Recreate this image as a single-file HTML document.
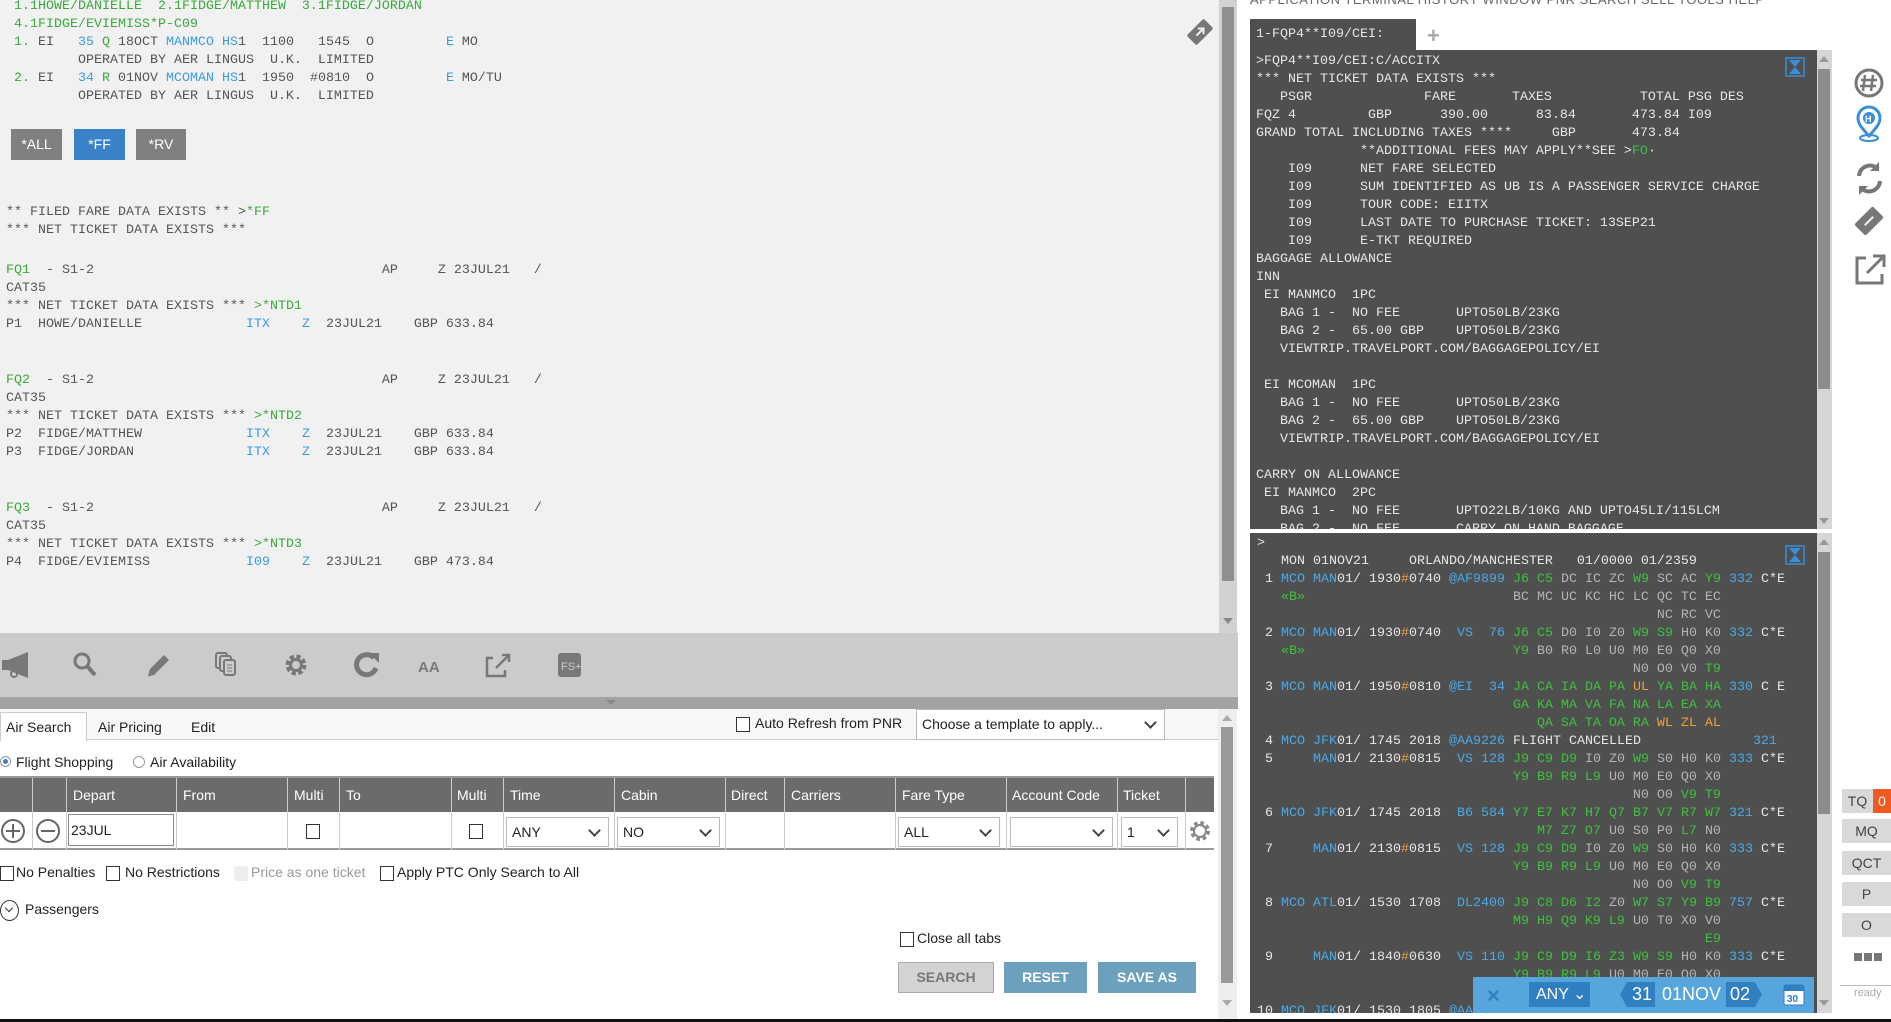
<!DOCTYPE html>
<html><head><meta charset="utf-8">
<style>
*{margin:0;padding:0;box-sizing:border-box}
body{width:1891px;height:1022px;position:relative;overflow:hidden;background:#fff;font-family:"Liberation Sans",sans-serif}
.a{position:absolute}
pre{position:absolute;font-family:"Liberation Mono",monospace;font-size:13.33px;line-height:18px;white-space:pre}
.lt{color:#555}
.lt .g{color:#3aa83a}.lt .b{color:#3b9be0}
.tm{color:#e6e6e6}
.tm .g{color:#3fc13f}.tm .b{color:#4ba9e6}.tm .o{color:#f0a23a}.tm .d{color:#b4b4b4}
.hd{position:absolute;top:778px;height:34px;background:#6b6b6b;color:#fff;font-size:14px;line-height:34px}
.sel{position:absolute;border:1px solid #bbb;background:#fff;font-size:14px;height:30px;line-height:28px;padding-left:5px;color:#222}
.sel:after{content:"";position:absolute;right:9px;top:8px;width:7px;height:7px;border-right:2px solid #444;border-bottom:2px solid #444;transform:rotate(45deg)}
.cb{position:absolute;width:14px;height:15px;border:1px solid #333;background:#fff}
.ft{position:absolute;font-size:14px;color:#222}
.rb{position:absolute;left:1842px;width:49px;height:24px;background:#d9d9d9;color:#444;font-size:14px;text-align:center;line-height:24px}
</style></head><body>

<!-- LEFT TERMINAL -->
<div class="a" style="left:0;top:0;width:1219px;height:633px;background:#f1f1f1"></div>
<div class="a" style="left:1219px;top:0;width:18px;height:633px;background:#d2d2d2"></div>
<div class="a" style="left:1222px;top:7px;width:12px;height:574px;background:#8f8f8f"></div>
<div class="a" style="left:1223px;top:618px;width:0;height:0;border-left:5px solid transparent;border-right:5px solid transparent;border-top:6px solid #888"></div>
<svg class="a" style="left:1186px;top:18px" width="28" height="28" viewBox="0 0 28 28"><g transform="rotate(-45 14 14)"><rect x="2" y="7" width="24" height="14" rx="2" fill="#777"/><path d="M9 14h10M15 10l4 4-4 4" stroke="#f1f1f1" stroke-width="2" fill="none"/></g></svg>

<pre class="lt" style="left:6px;top:-2px"> <span class="g">1.1HOWE/DANIELLE  2.1FIDGE/MATTHEW  3.1FIDGE/JORDAN</span>
 <span class="g">4.1FIDGE/EVIEMISS*P-C09</span>
 <span class="g">1.</span> EI   <span class="b">35</span> <span class="g">Q</span> 18OCT <span class="b">MANMCO HS</span>1  1100   1545  O         <span class="b">E</span> MO
         OPERATED BY AER LINGUS  U.K.  LIMITED
 <span class="g">2.</span> EI   <span class="b">34</span> <span class="g">R</span> 01NOV <span class="b">MCOMAN HS</span>1  1950  #0810  O         <span class="b">E</span> MO/TU
         OPERATED BY AER LINGUS  U.K.  LIMITED</pre>
<div class="a" style="left:11px;top:129px;width:51px;height:31px;background:#808080;color:#fff;font-size:14px;line-height:31px;text-align:center">*ALL</div>
<div class="a" style="left:74px;top:129px;width:51px;height:31px;background:#3a82c8;color:#fff;font-size:14px;line-height:31px;text-align:center">*FF</div>
<div class="a" style="left:136px;top:129px;width:50px;height:31px;background:#808080;color:#fff;font-size:14px;line-height:31px;text-align:center">*RV</div>
<pre class="lt" style="left:6px;top:204px">** FILED FARE DATA EXISTS ** &gt;<span class="g">*FF</span>
*** NET TICKET DATA EXISTS ***</pre>
<pre class="lt" style="left:6px;top:262px"><span class="g">FQ1</span>  - S1-2                                    AP     Z 23JUL21   /
CAT35
*** NET TICKET DATA EXISTS *** <span class="g">&gt;*NTD1</span>
P1  HOWE/DANIELLE             <span class="b">ITX</span>    <span class="b">Z</span>  23JUL21    GBP 633.84</pre>
<pre class="lt" style="left:6px;top:372px"><span class="g">FQ2</span>  - S1-2                                    AP     Z 23JUL21   /
CAT35
*** NET TICKET DATA EXISTS *** <span class="g">&gt;*NTD2</span>
P2  FIDGE/MATTHEW             <span class="b">ITX</span>    <span class="b">Z</span>  23JUL21    GBP 633.84
P3  FIDGE/JORDAN              <span class="b">ITX</span>    <span class="b">Z</span>  23JUL21    GBP 633.84</pre>
<pre class="lt" style="left:6px;top:500px"><span class="g">FQ3</span>  - S1-2                                    AP     Z 23JUL21   /
CAT35
*** NET TICKET DATA EXISTS *** <span class="g">&gt;*NTD3</span>
P4  FIDGE/EVIEMISS            <span class="b">I09</span>    <span class="b">Z</span>  23JUL21    GBP 473.84</pre>

<!-- TOOLBAR -->
<div class="a" style="left:0;top:633px;width:1238px;height:64px;background:#cbcbcb"></div>
<div class="a" style="left:0;top:697px;width:1238px;height:12px;background:#a2a2a2"></div>
<div class="a" style="left:606px;top:700px;border-left:5px solid transparent;border-right:5px solid transparent;border-top:5px solid #888"></div>
<svg class="a" style="left:0;top:650px" width="640" height="32" viewBox="0 650 640 32" fill="#787878" stroke="#787878">
<path d="M2 660h6l20-8v26l-20-8H2z" stroke="none"/><circle cx="14" cy="674" r="3" fill="none" stroke-width="2"/>
<circle cx="82" cy="661" r="7" fill="none" stroke-width="3"/><path d="M87 666l8 9" stroke-width="4"/>
<path d="M148 676l2-7 14-14 5 5-14 14z" stroke="none"/><path d="M148 676l7-2" stroke-width="1"/>
<rect x="216" y="653" width="11" height="15" rx="2" fill="none" stroke-width="2"/><rect x="220" y="656" width="11" height="15" rx="2" fill="#cbcbcb" stroke-width="2"/><rect x="224" y="660" width="11" height="15" rx="2" fill="#cbcbcb" stroke-width="2"/><path d="M227 665h5M227 668h5M227 671h5" stroke-width="1"/>
<circle cx="296" cy="665" r="8" fill="none" stroke-width="5" stroke-dasharray="4 2.3"/><circle cx="296" cy="665" r="5.5" fill="none" stroke-width="3"/>
<path d="M374 658a10 10 0 1 0 2 10" fill="none" stroke-width="5"/><path d="M369 653h10v10z" stroke="none"/>
<text x="418" y="672" font-family="Liberation Sans" font-weight="bold" font-size="15" stroke="none">AA</text>
<path d="M493 658h-6v18h18v-6" fill="none" stroke-width="2.5"/><path d="M496 668l12-12M502 655h7v7" fill="none" stroke-width="2.5"/>
<rect x="558" y="653" width="23" height="24" rx="3" stroke="none"/><text x="561" y="670" font-size="11" fill="#cbcbcb" stroke="none" font-family="Liberation Sans">FS+</text>
</svg>

<!-- FORM -->
<div class="a" style="left:0;top:709px;width:1218px;height:31px;background:#f7f7f7;border-bottom:1px solid #ccc"></div>
<div class="a" style="left:0;top:712px;width:87px;height:29px;background:#fff;border:1px solid #ccc;border-bottom:none"></div>
<div class="ft" style="left:6px;top:719px">Air Search</div>
<div class="ft" style="left:98px;top:719px">Air Pricing</div>
<div class="ft" style="left:191px;top:719px">Edit</div>
<div class="cb" style="left:736px;top:717px"></div>
<div class="ft" style="left:755px;top:715px">Auto Refresh from PNR</div>
<div class="sel" style="left:916px;top:709px;width:249px;height:31px">Choose a template to apply...</div>
<div class="a" style="left:0;top:756px;width:11px;height:11px;border-radius:50%;border:1px solid #999;background:#3a82c8;box-shadow:inset 0 0 0 2px #fff"></div>
<div class="ft" style="left:16px;top:754px">Flight Shopping</div>
<div class="a" style="left:133px;top:756px;width:12px;height:12px;border-radius:50%;border:1px solid #999"></div>
<div class="ft" style="left:150px;top:754px">Air Availability</div>
<div class="a" style="left:0;top:776px;width:1214px;height:2px;background:#999"></div>
<div class="hd" style="left:0;width:1214px"></div>
<div class="a" style="left:0;top:812px;width:1214px;height:38px;background:#fff;border-bottom:2px solid #999"></div>
<div class="a" style="left:32px;top:778px;width:1px;height:72px;background:#ccc"></div>
<div class="a" style="left:66px;top:778px;width:1px;height:72px;background:#ccc"></div>
<div class="a" style="left:176px;top:778px;width:1px;height:72px;background:#ccc"></div>
<div class="a" style="left:287px;top:778px;width:1px;height:72px;background:#ccc"></div>
<div class="a" style="left:339px;top:778px;width:1px;height:72px;background:#ccc"></div>
<div class="a" style="left:451px;top:778px;width:1px;height:72px;background:#ccc"></div>
<div class="a" style="left:503px;top:778px;width:1px;height:72px;background:#ccc"></div>
<div class="a" style="left:614px;top:778px;width:1px;height:72px;background:#ccc"></div>
<div class="a" style="left:725px;top:778px;width:1px;height:72px;background:#ccc"></div>
<div class="a" style="left:784px;top:778px;width:1px;height:72px;background:#ccc"></div>
<div class="a" style="left:895px;top:778px;width:1px;height:72px;background:#ccc"></div>
<div class="a" style="left:1006px;top:778px;width:1px;height:72px;background:#ccc"></div>
<div class="a" style="left:1117px;top:778px;width:1px;height:72px;background:#ccc"></div>
<div class="a" style="left:1185px;top:778px;width:1px;height:72px;background:#ccc"></div>
<div class="hd" style="left:73px">Depart</div>
<div class="hd" style="left:183px">From</div>
<div class="hd" style="left:294px">Multi</div>
<div class="hd" style="left:346px">To</div>
<div class="hd" style="left:457px">Multi</div>
<div class="hd" style="left:510px">Time</div>
<div class="hd" style="left:621px">Cabin</div>
<div class="hd" style="left:731px">Direct</div>
<div class="hd" style="left:791px">Carriers</div>
<div class="hd" style="left:902px">Fare Type</div>
<div class="hd" style="left:1012px">Account Code</div>
<div class="hd" style="left:1123px">Ticket</div>
<svg class="a" style="left:0;top:818px" width="64" height="26"><circle cx="13" cy="13" r="11" fill="none" stroke="#666" stroke-width="2"/><path d="M13 6v14M6 13h14" stroke="#666" stroke-width="2"/><circle cx="48" cy="13" r="11" fill="none" stroke="#666" stroke-width="2"/><path d="M41 13h14" stroke="#666" stroke-width="2"/></svg>
<div class="a" style="left:68px;top:814px;width:106px;height:32px;border:1px solid #888;font-size:14px;line-height:30px;padding-left:2px;color:#222">23JUL</div>
<div class="cb" style="left:306px;top:824px"></div>
<div class="cb" style="left:469px;top:824px"></div>
<div class="sel" style="left:506px;top:817px;width:103px">ANY</div>
<div class="sel" style="left:617px;top:817px;width:103px">NO</div>
<div class="sel" style="left:898px;top:817px;width:102px">ALL</div>
<div class="sel" style="left:1010px;top:817px;width:103px"></div>
<div class="sel" style="left:1121px;top:817px;width:57px">1</div>
<svg class="a" style="left:1188px;top:819px" width="24" height="24"><circle cx="12" cy="12" r="8" fill="none" stroke="#888" stroke-width="4" stroke-dasharray="3.5 2.8"/><circle cx="12" cy="12" r="6" fill="none" stroke="#888" stroke-width="2"/></svg>
<div class="cb" style="left:0;top:866px"></div><div class="ft" style="left:16px;top:864px">No Penalties</div>
<div class="cb" style="left:106px;top:866px"></div><div class="ft" style="left:125px;top:864px">No Restrictions</div>
<div class="a" style="left:234px;top:866px;width:14px;height:15px;background:#eee"></div><div class="ft" style="left:251px;top:864px;color:#999">Price as one ticket</div>
<div class="cb" style="left:380px;top:866px"></div><div class="ft" style="left:397px;top:864px">Apply PTC Only Search to All</div>
<div class="a" style="left:0;top:900px;width:19px;height:21px;border-radius:50%;border:1.5px solid #333"></div>
<div class="a" style="left:6px;top:905px;width:6px;height:6px;border-right:1.5px solid #333;border-bottom:1.5px solid #333;transform:rotate(45deg)"></div>
<div class="ft" style="left:25px;top:901px">Passengers</div>
<div class="cb" style="left:900px;top:932px"></div><div class="ft" style="left:917px;top:930px">Close all tabs</div>
<div class="a" style="left:898px;top:962px;width:96px;height:31px;background:#d3d3d3;border:1px solid #aaa;color:#777;font-size:14px;font-weight:bold;text-align:center;line-height:29px">SEARCH</div>
<div class="a" style="left:1004px;top:962px;width:83px;height:31px;background:#6d9fbe;color:#fff;font-size:14px;font-weight:bold;text-align:center;line-height:31px">RESET</div>
<div class="a" style="left:1098px;top:962px;width:98px;height:31px;background:#6d9fbe;color:#fff;font-size:14px;font-weight:bold;text-align:center;line-height:31px">SAVE AS</div>
<div class="a" style="left:1218px;top:709px;width:19px;height:311px;background:#eee"></div>
<div class="a" style="left:1221px;top:727px;width:12px;height:256px;background:#9a9a9a"></div>
<div class="a" style="left:1222px;top:715px;border-left:5px solid transparent;border-right:5px solid transparent;border-bottom:6px solid #aaa"></div>
<div class="a" style="left:1222px;top:1000px;border-left:5px solid transparent;border-right:5px solid transparent;border-top:6px solid #aaa"></div>

<!-- RIGHT -->
<div class="a" style="left:1250px;top:-8px;font-size:13px;color:#666;letter-spacing:0.5px">APPLICATION  TERMINAL  HISTORY  WINDOW  PNR  SEARCH  SELL  TOOLS  HELP</div>
<div class="a" style="left:1250px;top:19px;width:166px;height:32px;background:#4f4f4f"></div>
<pre class="tm" style="left:1256px;top:26px">1-FQP4**I09/CEI:</pre>
<div class="a" style="left:1427px;top:26px;font-size:22px;font-weight:bold;color:#aaa;line-height:20px">+</div>
<div class="a" style="left:1250px;top:50px;width:567px;height:479px;background:#4f4f4f;overflow:hidden">
<pre class="tm" style="left:6px;top:3px">&gt;FQP4**I09/CEI:C/ACCITX
*** NET TICKET DATA EXISTS ***
   PSGR              FARE       TAXES           TOTAL PSG DES
FQZ 4         GBP      390.00      83.84       473.84 I09
GRAND TOTAL INCLUDING TAXES ****     GBP       473.84
             **ADDITIONAL FEES MAY APPLY**SEE &gt;<span class="g">FO</span>·
    I09      NET FARE SELECTED
    I09      SUM IDENTIFIED AS UB IS A PASSENGER SERVICE CHARGE
    I09      TOUR CODE: EIITX
    I09      LAST DATE TO PURCHASE TICKET: 13SEP21
    I09      E-TKT REQUIRED
BAGGAGE ALLOWANCE
INN
 EI MANMCO  1PC
   BAG 1 -  NO FEE       UPTO50LB/23KG
   BAG 2 -  65.00 GBP    UPTO50LB/23KG
   VIEWTRIP.TRAVELPORT.COM/BAGGAGEPOLICY/EI

 EI MCOMAN  1PC
   BAG 1 -  NO FEE       UPTO50LB/23KG
   BAG 2 -  65.00 GBP    UPTO50LB/23KG
   VIEWTRIP.TRAVELPORT.COM/BAGGAGEPOLICY/EI

CARRY ON ALLOWANCE
 EI MANMCO  2PC
   BAG 1 -  NO FEE       UPTO22LB/10KG AND UPTO45LI/115LCM
   BAG 2 -  NO FEE       CARRY ON HAND BAGGAGE</pre>
<svg class="a" style="left:535px;top:7px" width="20" height="20"><rect x="1" y="1" width="18" height="18" fill="none" stroke="#3a8fd6" stroke-width="1.5"/><path d="M4 3h12l-6 7zM4 17h12l-6-7z" fill="#3a8fd6"/></svg>
</div>
<div class="a" style="left:1817px;top:50px;width:15px;height:479px;background:#d6d6d6"></div>
<div class="a" style="left:1818px;top:69px;width:12px;height:320px;background:#8c8c8c"></div>
<div class="a" style="left:1819px;top:56px;border-left:5px solid transparent;border-right:5px solid transparent;border-bottom:6px solid #999"></div>
<div class="a" style="left:1819px;top:518px;border-left:5px solid transparent;border-right:5px solid transparent;border-top:6px solid #999"></div>

<div class="a" style="left:1250px;top:533px;width:567px;height:480px;background:#4f4f4f;overflow:hidden">
<pre class="tm" style="left:7px;top:2px">&gt;
   MON 01NOV21     ORLANDO/MANCHESTER   01/0000 01/2359
 1 <span class="b">MCO MAN</span>01/ 1930<span class="o">#</span>0740 <span class="b">@AF9899</span> <span class="g">J6 C5</span> <span class="d">DC IC ZC</span> <span class="g">W9</span> <span class="d">SC AC</span> <span class="g">Y9</span> <span class="b">332</span> C*E
   <span class="g">«B»</span>                          <span class="d">BC MC UC KC HC LC QC TC EC</span>
                                                  <span class="d">NC RC VC</span>
 2 <span class="b">MCO MAN</span>01/ 1930<span class="o">#</span>0740  <span class="b">VS  76</span> <span class="g">J6 C5</span> <span class="d">D0 I0 Z0</span> <span class="g">W9 S9</span> <span class="d">H0 K0</span> <span class="b">332</span> C*E
   <span class="g">«B»</span>                          <span class="g">Y9</span> <span class="d">B0 R0 L0 U0 M0 E0 Q0 X0</span>
                                               <span class="d">N0 O0 V0</span> <span class="g">T9</span>
 3 <span class="b">MCO MAN</span>01/ 1950<span class="o">#</span>0810 <span class="b">@EI  34</span> <span class="g">JA CA IA DA PA</span> <span class="o">UL</span> <span class="g">YA BA HA</span> <span class="b">330</span> C E
                                <span class="g">GA KA MA VA FA NA LA EA XA</span>
                                   <span class="g">QA SA TA OA RA</span> <span class="o">WL ZL AL</span>
 4 <span class="b">MCO JFK</span>01/ 1745 2018 <span class="b">@AA9226</span> FLIGHT CANCELLED              <span class="b">321</span>
 5     <span class="b">MAN</span>01/ 2130<span class="o">#</span>0815  <span class="b">VS 128</span> <span class="g">J9 C9 D9</span> <span class="d">I0 Z0</span> <span class="g">W9</span> <span class="d">S0 H0 K0</span> <span class="b">333</span> C*E
                                <span class="g">Y9 B9 R9 L9</span> <span class="d">U0 M0 E0 Q0 X0</span>
                                               <span class="d">N0 O0</span> <span class="g">V9 T9</span>
 6 <span class="b">MCO JFK</span>01/ 1745 2018  <span class="b">B6 584</span> <span class="g">Y7 E7 K7 H7 Q7 B7 V7 R7 W7</span> <span class="b">321</span> C*E
                                   <span class="g">M7 Z7 O7</span> <span class="d">U0 S0 P0</span> <span class="g">L7</span> <span class="d">N0</span>
 7     <span class="b">MAN</span>01/ 2130<span class="o">#</span>0815  <span class="b">VS 128</span> <span class="g">J9 C9 D9</span> <span class="d">I0 Z0</span> <span class="g">W9</span> <span class="d">S0 H0 K0</span> <span class="b">333</span> C*E
                                <span class="g">Y9 B9 R9 L9</span> <span class="d">U0 M0 E0 Q0 X0</span>
                                               <span class="d">N0 O0</span> <span class="g">V9 T9</span>
 8 <span class="b">MCO ATL</span>01/ 1530 1708  <span class="b">DL2400</span> <span class="g">J9 C8 D6 I2</span> <span class="d">Z0</span> <span class="g">W7 S7 Y9 B9</span> <span class="b">757</span> C*E
                                <span class="g">M9 H9 Q9 K9 L9</span> <span class="d">U0 T0 X0 V0</span>
                                                        <span class="g">E9</span>
 9     <span class="b">MAN</span>01/ 1840<span class="o">#</span>0630  <span class="b">VS 110</span> <span class="g">J9 C9 D9 I6 Z3 W9 S9</span> <span class="d">H0 K0</span> <span class="b">333</span> C*E
                                <span class="g">Y9 B9 R9 L9</span> <span class="d">U0 M0 E0 Q0 X0</span>

10 <span class="b">MCO JFK</span>01/ 1530 1805 <span class="b">@AA</span></pre>
<svg class="a" style="left:535px;top:12px" width="20" height="20"><rect x="1" y="1" width="18" height="18" fill="none" stroke="#3a8fd6" stroke-width="1.5"/><path d="M4 3h12l-6 7zM4 17h12l-6-7z" fill="#3a8fd6"/></svg>
<div class="a" style="left:223px;top:444px;width:341px;height:36px;background:#56a5dc"></div>
<div class="a" style="left:237px;top:450px;font-size:22px;font-weight:bold;color:#2f7fc1">×</div>
<div class="a" style="left:279px;top:449px;width:61px;height:25px;background:#2f7fc1;color:#fff;font-size:16px;line-height:25px;padding-left:7px">ANY ⌄</div>
<div class="a" style="left:370px;top:449px;width:35px;height:25px;background:#2f7fc1;color:#fff;font-size:18px;line-height:25px;text-align:right;padding-right:3px;clip-path:polygon(20% 0,100% 0,100% 100%,20% 100%,0 50%)">31</div>
<div class="a" style="left:412px;top:449px;color:#fff;font-size:18px;line-height:25px">01NOV</div>
<div class="a" style="left:476px;top:449px;width:36px;height:25px;background:#2f7fc1;color:#fff;font-size:18px;line-height:25px;padding-left:4px;clip-path:polygon(0 0,80% 0,100% 50%,80% 100%,0 100%)">02</div>
<svg class="a" style="left:533px;top:449px" width="22" height="24"><rect x="1" y="3" width="20" height="20" rx="2" fill="#fff" stroke="#2f7fc1"/><rect x="1" y="3" width="20" height="6" fill="#2f7fc1"/><text x="4" y="20" font-size="10" font-weight="bold" fill="#2f7fc1" font-family="Liberation Sans">30</text></svg>
</div>
<div class="a" style="left:1817px;top:533px;width:15px;height:480px;background:#d6d6d6"></div>
<div class="a" style="left:1818px;top:552px;width:12px;height:262px;background:#8c8c8c"></div>
<div class="a" style="left:1819px;top:539px;border-left:5px solid transparent;border-right:5px solid transparent;border-bottom:6px solid #999"></div>
<div class="a" style="left:1819px;top:1000px;border-left:5px solid transparent;border-right:5px solid transparent;border-top:6px solid #999"></div>

<!-- right icons -->
<svg class="a" style="left:1852px;top:66px" width="36" height="220" viewBox="0 66 36 220">
<circle cx="17" cy="83" r="13" fill="none" stroke="#777" stroke-width="3"/><path d="M13 75l-2 16M21 75l-2 16M9 80h16M8 86h16" stroke="#777" stroke-width="2.5"/>
<path d="M17 136c-7-8-11-12-11-18a11 11 0 0 1 22 0c0 6-4 10-11 18z" fill="none" stroke="#3a8fd6" stroke-width="3"/><circle cx="17" cy="118" r="6" fill="#3a8fd6"/><text x="13" y="122" font-size="9" fill="#fff" font-family="Liberation Sans" font-weight="bold">H</text><ellipse cx="17" cy="138" rx="9" ry="3" fill="none" stroke="#3a8fd6" stroke-width="2"/>
<path d="M7 176a11 11 0 0 1 19-7M28 181a11 11 0 0 1-19 7" fill="none" stroke="#777" stroke-width="4"/><path d="M27 162v9h-9zM7 195v-9h9z" fill="#777"/>
<g transform="rotate(-45 17 221)"><rect x="4" y="213" width="26" height="16" rx="2" fill="#777"/><path d="M11 221h12" stroke="#eee" stroke-width="2"/></g>
<path d="M14 258h-9v25h25v-9" fill="none" stroke="#777" stroke-width="3"/><path d="M15 273l15-15M21 256h11v11" fill="none" stroke="#777" stroke-width="3"/>
</svg>
<div class="rb" style="top:789px;width:31px">TQ</div>
<div class="a" style="left:1873px;top:789px;width:18px;height:24px;background:#f05a22;color:#fff;font-size:14px;line-height:24px;text-align:center">0</div>
<div class="rb" style="top:819px">MQ</div>
<div class="rb" style="top:851px">QCT</div>
<div class="rb" style="top:882px">P</div>
<div class="rb" style="top:913px">O</div>
<div class="a" style="left:1854px;top:953px;width:28px;height:8px;background:repeating-linear-gradient(90deg,#777 0 8px,transparent 8px 10px)"></div>
<div class="a" style="left:1840px;top:985px;width:51px;height:1px;background:#bbb"></div>
<div class="a" style="left:1854px;top:987px;font-size:11px;color:#aaa">ready</div>

<div class="a" style="left:0;top:1019px;width:1891px;height:3px;background:#111"></div>
</body></html>
